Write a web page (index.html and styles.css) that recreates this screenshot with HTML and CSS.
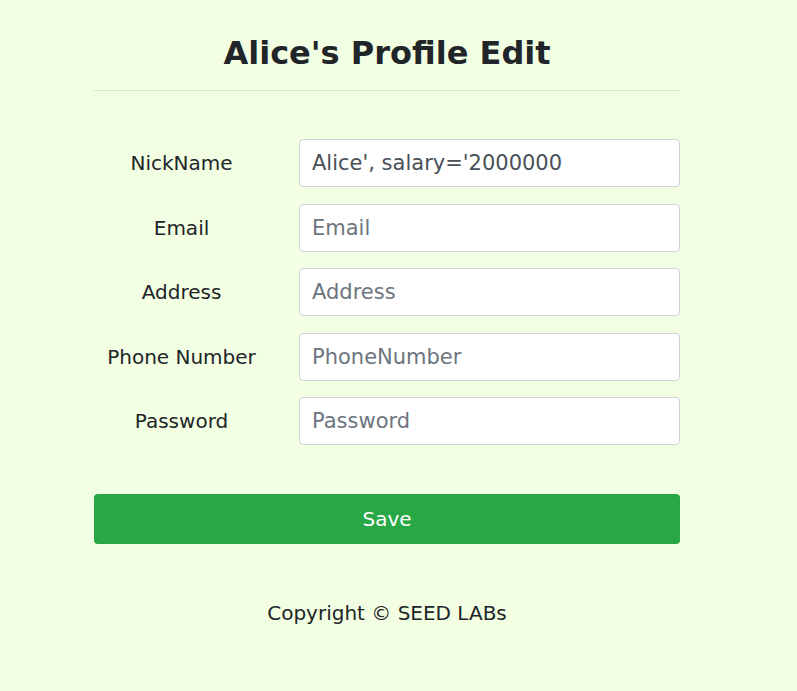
FILE: index.html
```html
<!DOCTYPE html>
<html lang="en">
<head>
<meta charset="utf-8">
<title>Alice's Profile Edit</title>
<link rel="stylesheet" href="styles.css">
</head>
<body>
<main class="container">
  <h2 class="title">Alice's Profile Edit</h2>
  <hr class="rule">
  <form class="form">
    <div class="row">
      <label class="label" for="nick">NickName</label>
      <input class="field" id="nick" type="text" value="Alice', salary='2000000">
    </div>
    <div class="row">
      <label class="label" for="email">Email</label>
      <input class="field" id="email" type="text" placeholder="Email">
    </div>
    <div class="row">
      <label class="label" for="addr">Address</label>
      <input class="field" id="addr" type="text" placeholder="Address">
    </div>
    <div class="row">
      <label class="label" for="phone">Phone Number</label>
      <input class="field" id="phone" type="text" placeholder="PhoneNumber">
    </div>
    <div class="row">
      <label class="label" for="pwd">Password</label>
      <input class="field" id="pwd" type="password" placeholder="Password">
    </div>
    <button class="save" type="button">Save</button>
  </form>
  <p class="footer">Copyright © SEED LABs</p>
</main>
</body>
</html>
```

FILE: styles.css
```css
html, body {
  margin: 0;
  padding: 0;
  background: #f3ffe3;
}
body {
  font-family: "DejaVu Sans", Verdana, sans-serif;
  color: #212529;
}
.container {
  width: 586px;
  margin: 0 0 0 94px;
  padding-top: 34px;
}
.title {
  margin: 0;
  font-size: 32px;
  line-height: 1.2;
  font-weight: bold;
  text-align: center;
  color: #212529;
}
.rule {
  margin: 17.6px 0 0 0;
  border: 0;
  border-top: 1px solid rgba(0, 0, 0, 0.1);
  height: 0;
}
.form {
  margin-top: 48.5px;
  display: flex;
  flex-direction: column;
  gap: 16.5px;
}
.row {
  display: flex;
  align-items: center;
  gap: 30px;
}
.label {
  width: 175px;
  flex: none;
  text-align: center;
  font-size: 20px;
  line-height: 30px;
  color: #212529;
}
.field {
  flex: 1;
  box-sizing: border-box;
  height: 48px;
  margin: 0;
  padding: 8px 12px;
  font-family: "DejaVu Sans", Verdana, sans-serif;
  font-size: 21px;
  line-height: 30px;
  color: #495057;
  background: #fff;
  border: 1px solid #ced4da;
  border-radius: 4px;
  outline: none;
}
.field::placeholder {
  color: #6c757d;
  opacity: 1;
}
.save {
  margin-top: 32px;
  height: 50px;
  width: 100%;
  border: 0;
  border-radius: 4px;
  background: #28a745;
  color: #fff;
  font-family: "DejaVu Sans", Verdana, sans-serif;
  font-size: 20px;
  line-height: 30px;
  cursor: pointer;
}
.footer {
  margin: 54px 0 0 0;
  text-align: center;
  font-size: 20px;
  line-height: 30px;
  color: #212529;
}
```
